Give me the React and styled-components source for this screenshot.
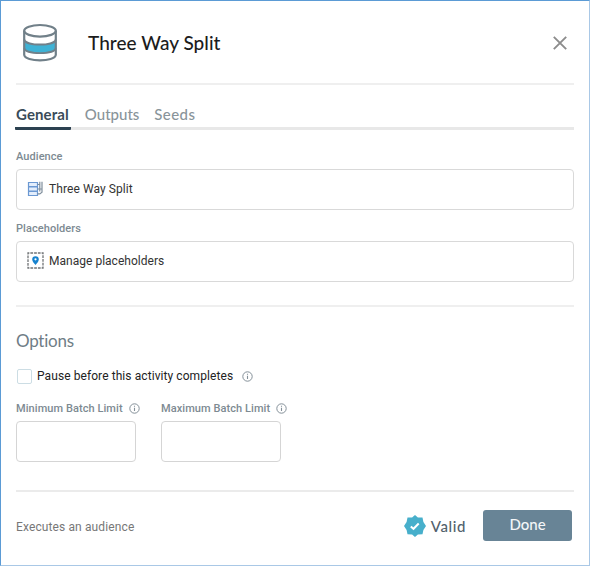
import React, { useState } from 'react';
import styled, { createGlobalStyle } from 'styled-components';

const tabs = [
    { name: "General", spacing: "0.1px" },
    { name: "Outputs", spacing: "0" },
    { name: "Seeds", spacing: "0.4px" },
]

const App = () => {
    const [activeTab, setActiveTab] = useState("General");
    const [paused, setPaused] = useState(false);

    return (
        <>
            <GlobalStyle />
            <Dialog>
                <Header>
                    <DatabaseIcon />
                    <Title>Three Way Split</Title>
                    <CloseButton aria-label="Close">
                        <svg width="14" height="14" viewBox="0 0 14 14" fill="none" stroke="#8c8c8c" strokeWidth="1.9">
                            <path d="M.8.8l12.4 12.4M13.2.8L.8 13.2" />
                        </svg>
                    </CloseButton>
                </Header>

                <Tabs>
                    {tabs.map(({ name, spacing }) => (
                        <Tab key={name} $active={name === activeTab} $spacing={spacing} onClick={() => setActiveTab(name)}>
                            {name}
                        </Tab>
                    ))}
                </Tabs>

                <Field>
                    <Label>Audience</Label>
                    <Picker>
                        <AudienceIcon />
                        <PickerText $spacing="0.08px">Three Way Split</PickerText>
                    </Picker>
                </Field>
                <Field>
                    <Label>Placeholders</Label>
                    <Picker>
                        <PlaceholderIcon />
                        <PickerText $spacing="0.02px">Manage placeholders</PickerText>
                    </Picker>
                </Field>

                <Options>
                    <OptionsTitle>Options</OptionsTitle>
                    <CheckRow>
                        <Checkbox type="checkbox" checked={paused} onChange={(e) => setPaused(e.target.checked)} />
                        <CheckText>Pause before this activity completes</CheckText>
                        <InfoIcon />
                    </CheckRow>
                    <Limits>
                        <Limit>
                            <Label>Minimum Batch Limit <InfoIcon /></Label>
                            <LimitInput aria-label="Minimum Batch Limit" />
                        </Limit>
                        <Limit>
                            <Label>Maximum Batch Limit <InfoIcon /></Label>
                            <LimitInput aria-label="Maximum Batch Limit" />
                        </Limit>
                    </Limits>
                </Options>

                <Footer>
                    <Description>Executes an audience</Description>
                    <ValidIcon />
                    <ValidText>Valid</ValidText>
                    <DoneButton>Done</DoneButton>
                </Footer>
            </Dialog>
        </>
    )
}

const DatabaseIcon = () => (
    <svg width="36" height="40" viewBox="0 0 36 40" fill="none" stroke="#718089" strokeWidth="2.2">
        <path d="M2 17c2 6.5 30 6.5 32 0v8.5c-2 6.5-30 6.5-32 0z" fill="#3eb2d5" stroke="none" />
        <ellipse cx="18" cy="7.8" rx="15.8" ry="5.8" />
        <path d="M2.2 7.8v24c1 7.4 30.6 7.4 31.6 0v-24" />
        <path d="M2.2 16.6c2 6.6 29.6 6.6 31.6 0M2.2 25.2c2 6.6 29.6 6.6 31.6 0" strokeWidth="1.9" />
    </svg>
)

const AudienceIcon = () => (
    <svg width="17" height="16" viewBox="0 0 17 16" fill="none">
        <g fill="#e4eefc" stroke="#6b98d2" strokeWidth="1.2">
            <path d="M1.5 1.5h9v4h-9zM1.5 6h9v4h-9zM1.5 10.5h9v4h-9z" />
        </g>
        <path d="M10.5 3.5h2M10.5 8h4.5M10.5 12.9h2.3l2.2-1.7V.8M12.8.8v9.6" stroke="#7f8e9c" strokeWidth="1.2" />
    </svg>
)

const PlaceholderIcon = () => (
    <svg width="17" height="18" viewBox="0 0 17 18" fill="none">
        <rect x="1" y="1" width="15" height="15" stroke="#707376" strokeWidth="1.3" strokeDasharray="2.75 1" strokeDashoffset="1.4" />
        <path d="M8.5 13C7.3 11.3 5.2 9.6 5.2 7.5a3.3 3.3 0 0 1 6.6 0c0 2.1-2.1 3.8-3.3 5.5z" fill="#1682ce" />
        <circle cx="8.5" cy="7.3" r="1.1" fill="#fff" />
    </svg>
)

const InfoIcon = () => (
    <svg width="11" height="11" viewBox="0 0 11 11" fill="none" stroke="#838f98">
        <circle cx="5.5" cy="5.5" r="4.7" strokeWidth="1" />
        <path d="M5.5 4.7v3.4M5.5 2.7v1.1" strokeWidth="1.1" />
    </svg>
)

const ValidIcon = () => (
    <svg width="22" height="22" viewBox="0 0 22 22">
        <path
            d="M11 0l2.9 2.4h4.6l.9 4.6L22 11l-2.6 4-.9 4.2-4.6.3L11 22l-2.9-2.5-4.6-.3L2.6 15 0 11l2.6-4 .9-4.6h4.6z"
            fill="#47afcb"
        />
        <path d="M6.8 11.4l2.7 2.4 5.2-5.3" fill="none" stroke="#fff" strokeWidth="2" />
    </svg>
)

const GlobalStyle = createGlobalStyle`
    * {
        box-sizing: border-box;
    }

    body {
        margin: 0;
        background-color: #fff;
        font-family: Roboto, "Liberation Sans", sans-serif;
    }

    svg {
        display: block;
        flex-shrink: 0;
    }
    `

const Dialog = styled.div`
    display: flex;
    flex-direction: column;
    width: 590px;
    height: 566px;
    padding: 0 15px;
    border: 1px solid #5b9bd5;
    border-right-color: #a9c8e6;
    border-bottom-color: #a9c8e6;
    `

const Header = styled.header`
    display: flex;
    align-items: center;
    height: 84px;
    padding: 2px 7px 0 6px;
    border-bottom: 2px solid #efefef;
    `

const Title = styled.h1`
    flex: 1;
    margin: 0 0 0 30px;
    color: #1c1c1c;
    font: 500 19px/24px Lato, sans-serif;
    letter-spacing: 0.03px;
    `

const CloseButton = styled.button`
    padding: 0;
    border: 0;
    background: none;
    `

const Tabs = styled.nav`
    display: flex;
    gap: 13px;
    height: 45px;
    margin-left: -1px;
    padding-top: 17px;
    border-bottom: 3px solid #e8e8e8;
    `

const Tab = styled.button`
    height: 28px;
    padding: 0 ${({ $active }) => ($active ? "2px" : "1px")} 2px 1px;
    border: 0;
    border-bottom: 3px solid ${({ $active }) => ($active ? "#2c4151" : "transparent")};
    border-radius: 1px;
    background: none;
    color: ${({ $active }) => ($active ? "#3a4c59" : "#89949a")};
    font: ${({ $active }) => ($active ? 700 : 500)} 15px/22px Lato, sans-serif;
    letter-spacing: ${({ $spacing }) => $spacing};
    white-space: nowrap;
    `

const Field = styled.div`
    height: 72px;
    padding-top: 18px;
    `

const Label = styled.label`
    display: flex;
    align-items: center;
    gap: 6px;
    height: 16px;
    margin-bottom: 5px;
    color: #7d8a92;
    font-size: 11px;
    font-weight: 500;
    letter-spacing: 0.07px;
    white-space: nowrap;
    `

const Picker = styled.div`
    display: flex;
    align-items: center;
    height: 41px;
    padding: 0 0 1px 10px;
    border: 1px solid #d9d9d9;
    border-radius: 4px;
    `

const PickerText = styled.span`
    margin-left: 5px;
    color: #333;
    font-size: 12px;
    letter-spacing: ${({ $spacing }) => $spacing};
    `

const Options = styled.section`
    height: 187px;
    margin-top: 31px;
    padding-top: 22px;
    border-top: 2px solid #efefef;
    border-bottom: 2px solid #ebebeb;
    `

const OptionsTitle = styled.h2`
    margin: 0;
    color: #6f7d86;
    font: 400 17px/24px Lato, sans-serif;
    font-variant-ligatures: none;
    letter-spacing: -0.25px;
    `

const CheckRow = styled.label`
    display: flex;
    align-items: center;
    height: 16px;
    margin-top: 15px;
    `

const Checkbox = styled.input`
    appearance: none;
    width: 15px;
    height: 15px;
    margin: 0 5px 0 1px;
    border: 1px solid #ccdde4;
    border-radius: 2px;
    `

const CheckText = styled.span`
    margin-right: 9px;
    color: #222;
    font-size: 12px;
    letter-spacing: 0.08px;
    `

const Limits = styled.div`
    display: flex;
    gap: 25px;
    margin-top: 16px;
    `

const Limit = styled.div`
    width: 120px;
    `

const LimitInput = styled.input`
    display: block;
    width: 120px;
    height: 41px;
    border: 1px solid #d5d5d5;
    border-radius: 4px;
    `

const Footer = styled.footer`
    display: flex;
    align-items: center;
    height: 67px;
    padding-right: 2px;
    `

const Description = styled.span`
    flex: 1;
    padding-top: 3px;
    color: #777;
    font-size: 12px;
    letter-spacing: 0.12px;
    `

const ValidText = styled.span`
    margin: 0 17px 0 5px;
    color: #52616c;
    font: 500 15px/20px Lato, sans-serif;
    letter-spacing: 0.6px;
    `

const DoneButton = styled.button`
    width: 89px;
    height: 31px;
    padding: 0 0 3px;
    border: 0;
    border-radius: 3px;
    background: #688496;
    color: #f3f6f8;
    font: 500 15px/20px Lato, sans-serif;
    `

export default App
